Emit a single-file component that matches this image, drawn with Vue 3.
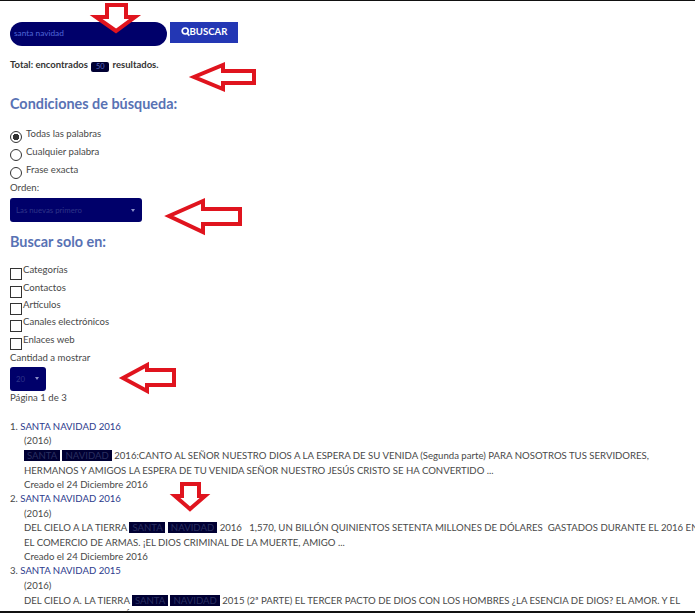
<script setup>
const radios = [
  { label: 'Todas las palabras', on: true },
  { label: 'Cualquier palabra', on: false },
  { label: 'Frase exacta', on: false }
]
const checks = ['Categorías', 'Contactos', 'Artículos', 'Canales electrónicos', 'Enlaces web']
</script>

<template>
  <div class="page">
    <form class="search" @submit.prevent>
      <div class="input">santa navidad</div>
      <button class="btn" type="button">
        <svg width="9" height="10" viewBox="0 0 9 10"><circle cx="4.2" cy="4" r="3" fill="none" stroke="#fff" stroke-width="1.7"/><path d="M6 6l2.4 2.6" stroke="#fff" stroke-width="1.7"/></svg>BUSCAR
      </button>
    </form>
    <p class="total">Total: encontrados <span class="badge">50</span> resultados.</p>

    <h2 class="h1">Condiciones de búsqueda:</h2>
    <div class="radios">
      <div v-for="r in radios" :key="r.label" class="radio-row">
        <span class="radio" :class="{ on: r.on }"></span><span class="lift">{{ r.label }}</span>
      </div>
    </div>
    <div class="label">Orden:</div>
    <div class="select wide"><span>Las nuevas primero</span><i class="caret"></i></div>

    <h2 class="h2">Buscar solo en:</h2>
    <div class="checks">
      <div v-for="c in checks" :key="c" class="check-row">
        <span class="box"></span><span class="lift">{{ c }}</span>
      </div>
    </div>
    <div class="label cantidad">Cantidad a mostrar</div>
    <div class="select small"><span>20</span><i class="caret"></i></div>
    <div class="label">Página 1 de 3</div>

    <ol class="results">
      <li>
        <div class="title">1. <a>SANTA NAVIDAD 2016</a></div>
        <div class="body">
          <div>(2016)</div>
          <div class="text"><mark>&nbsp;SANTA&nbsp;</mark>&nbsp;<mark>&nbsp;NAVIDAD&nbsp;</mark> 2016:CANTO AL SEÑOR NUESTRO DIOS A LA ESPERA DE SU VENIDA (Segunda parte) PARA NOSOTROS TUS SERVIDORES,<br>HERMANOS Y AMIGOS LA ESPERA DE TU VENIDA SEÑOR NUESTRO JESÚS CRISTO SE HA CONVERTIDO ...</div>
          <div>Creado el 24 Diciembre 2016</div>
        </div>
      </li>
      <li>
        <div class="title">2. <a>SANTA NAVIDAD 2016</a></div>
        <div class="body">
          <div>(2016)</div>
          <div class="text">DEL CIELO A LA TIERRA <mark>&nbsp;SANTA&nbsp;</mark>&nbsp;<mark>&nbsp;NAVIDAD&nbsp;</mark> 2016 &nbsp; 1,570, UN BILLÓN QUINIENTOS SETENTA MILLONES DE DÓLARES &nbsp;GASTADOS DURANTE EL 2016 EN<br>EL COMERCIO DE ARMAS. ¡EL DIOS CRIMINAL DE LA MUERTE, AMIGO ...</div>
          <div>Creado el 24 Diciembre 2016</div>
        </div>
      </li>
      <li>
        <div class="title">3. <a>SANTA NAVIDAD 2015</a></div>
        <div class="body">
          <div>(2016)</div>
          <div class="text">DEL CIELO A. LA TIERRA <mark>&nbsp;SANTA&nbsp;</mark>&nbsp;<mark>&nbsp;NAVIDAD&nbsp;</mark> 2015 (2ª PARTE) EL TERCER PACTO DE DIOS CON LOS HOMBRES ¿LA ESENCIA DE DIOS? EL AMOR. Y EL<br>ROSTRO DE DIOS? JESÚS CRISTO, EL ROSTRO DEL AMOR ... DESDE LA PRIMAVERA</div>
        </div>
      </li>
    </ol>

    <!-- red annotation arrows drawn over the screenshot -->
    <svg class="overlay" width="695" height="613" viewBox="0 0 695 613">
      <g fill="#fff" stroke="#e0141e" stroke-width="4" stroke-linejoin="miter">
        <path d="M107 5H126V17H135L116 31 96 17H107Z" />
        <path d="M223 65V71H254V83H223V89L194 77Z" />
        <path d="M203 201V209H240V224H203V232L169 216Z" />
        <path d="M147 365V370H174V385H147V391L123 378Z" />
        <path d="M182 484H199V496H205L190 509 175 496H182Z" />
      </g>
    </svg>
    <div class="edge top"></div>
    <div class="edge bottom"></div>
  </div>
</template>

<style scoped>
.page {
  position: relative;
  width: 695px;
  height: 613px;
  overflow: hidden;
  box-sizing: border-box;
  padding: 22px 0 0 10px;
  background: #fff;
  font-family: Lato, "Open Sans", sans-serif;
  font-size: 9.6px;
  line-height: 14.4px;
  color: #484848;
}
.search { display: flex; align-items: flex-start; gap: 3px; }
.input {
  box-sizing: border-box;
  width: 157px;
  height: 24px;
  padding: 0 4px;
  border-radius: 12px;
  background: #00006a;
  color: #4f66d8;
  font-size: 8.3px;
  line-height: 23px;
}
.btn {
  display: flex;
  align-items: center;
  justify-content: center;
  width: 68px;
  height: 21px;
  padding: 0 0 2px;
  border: 0;
  background: #2337b4;
  color: #fff;
  font: 700 9.6px Lato, sans-serif;
}
.total { margin: 12px 0 0; font-weight: 700; font-size: 9.5px; color: #333; }
.badge {
  display: inline-block;
  width: 18px;
  height: 10px;
  margin: 0 1px;
  border-radius: 2px;
  background: #000033;
  color: #5a6ac0;
  font-size: 7.4px;
  font-weight: 400;
  line-height: 10px;
  text-align: center;
  vertical-align: -1px;
}
.h1, .h2 {
  margin: 0;
  color: #5872b4;
  font-size: 14.4px;
  font-weight: 700;
  line-height: 18px;
}
.h1 { margin-top: 23px; }
.h2 { margin-top: 11px; }
.radios { margin-top: 15px; }
.radio-row { display: flex; height: 17.7px; }
.radio {
  box-sizing: border-box;
  flex: none;
  width: 12px;
  height: 12px;
  margin-top: 3px;
  border: 1px solid #333;
  border-radius: 50%;
  background: #fff;
}
.radio.on { background: radial-gradient(circle, #333 0 3px, #fff 3.5px); }
.lift { position: relative; top: -2px; white-space: nowrap; }
.radio-row .lift { top: -1px; margin-left: 4px; }
.check-row .lift { margin-left: 1px; }
.label { height: 14px; }
.cantidad { margin-top: -1px; }
.select {
  box-sizing: border-box;
  display: flex;
  align-items: center;
  justify-content: space-between;
  border-radius: 3px;
  background: #00006a;
  color: #2f3488;
  font-size: 7.8px;
}
.select.wide { width: 132px; height: 24px; margin-top: 3px; padding: 0 7px 0 6px; }
.select.small { width: 36px; height: 24px; margin-top: 2px; padding: 0 7px 0 6px; }
.caret {
  width: 0;
  height: 0;
  border: 2px solid transparent;
  border-top: 3px solid #8b90c8;
  border-bottom: 0;
}
.checks { margin-top: 14px; }
.check-row { display: flex; height: 17.3px; }
.box {
  box-sizing: border-box;
  flex: none;
  width: 12px;
  height: 12px;
  margin-top: 3px;
  border: 1px solid #333;
  background: #fff;
}
.results { list-style: none; margin: 15px 0 0; padding: 0; }
.title { height: 14.4px; }
.title a { color: #2c3a8c; }
.body { padding-left: 14px; white-space: nowrap; }
.text { height: 28.6px; margin-top: 0.4px; }
mark { background: #000033; color: #2a2f60; padding: 0 0.5px; }
.overlay { position: absolute; top: 0; left: 0; pointer-events: none; }
.edge { position: absolute; left: 0; right: 0; background: #111; }
.edge.top { top: 0; height: 1px; }
.edge.bottom { bottom: 0; height: 2px; }
</style>

<style>
html, body { margin: 0; background: #fff; }
</style>
